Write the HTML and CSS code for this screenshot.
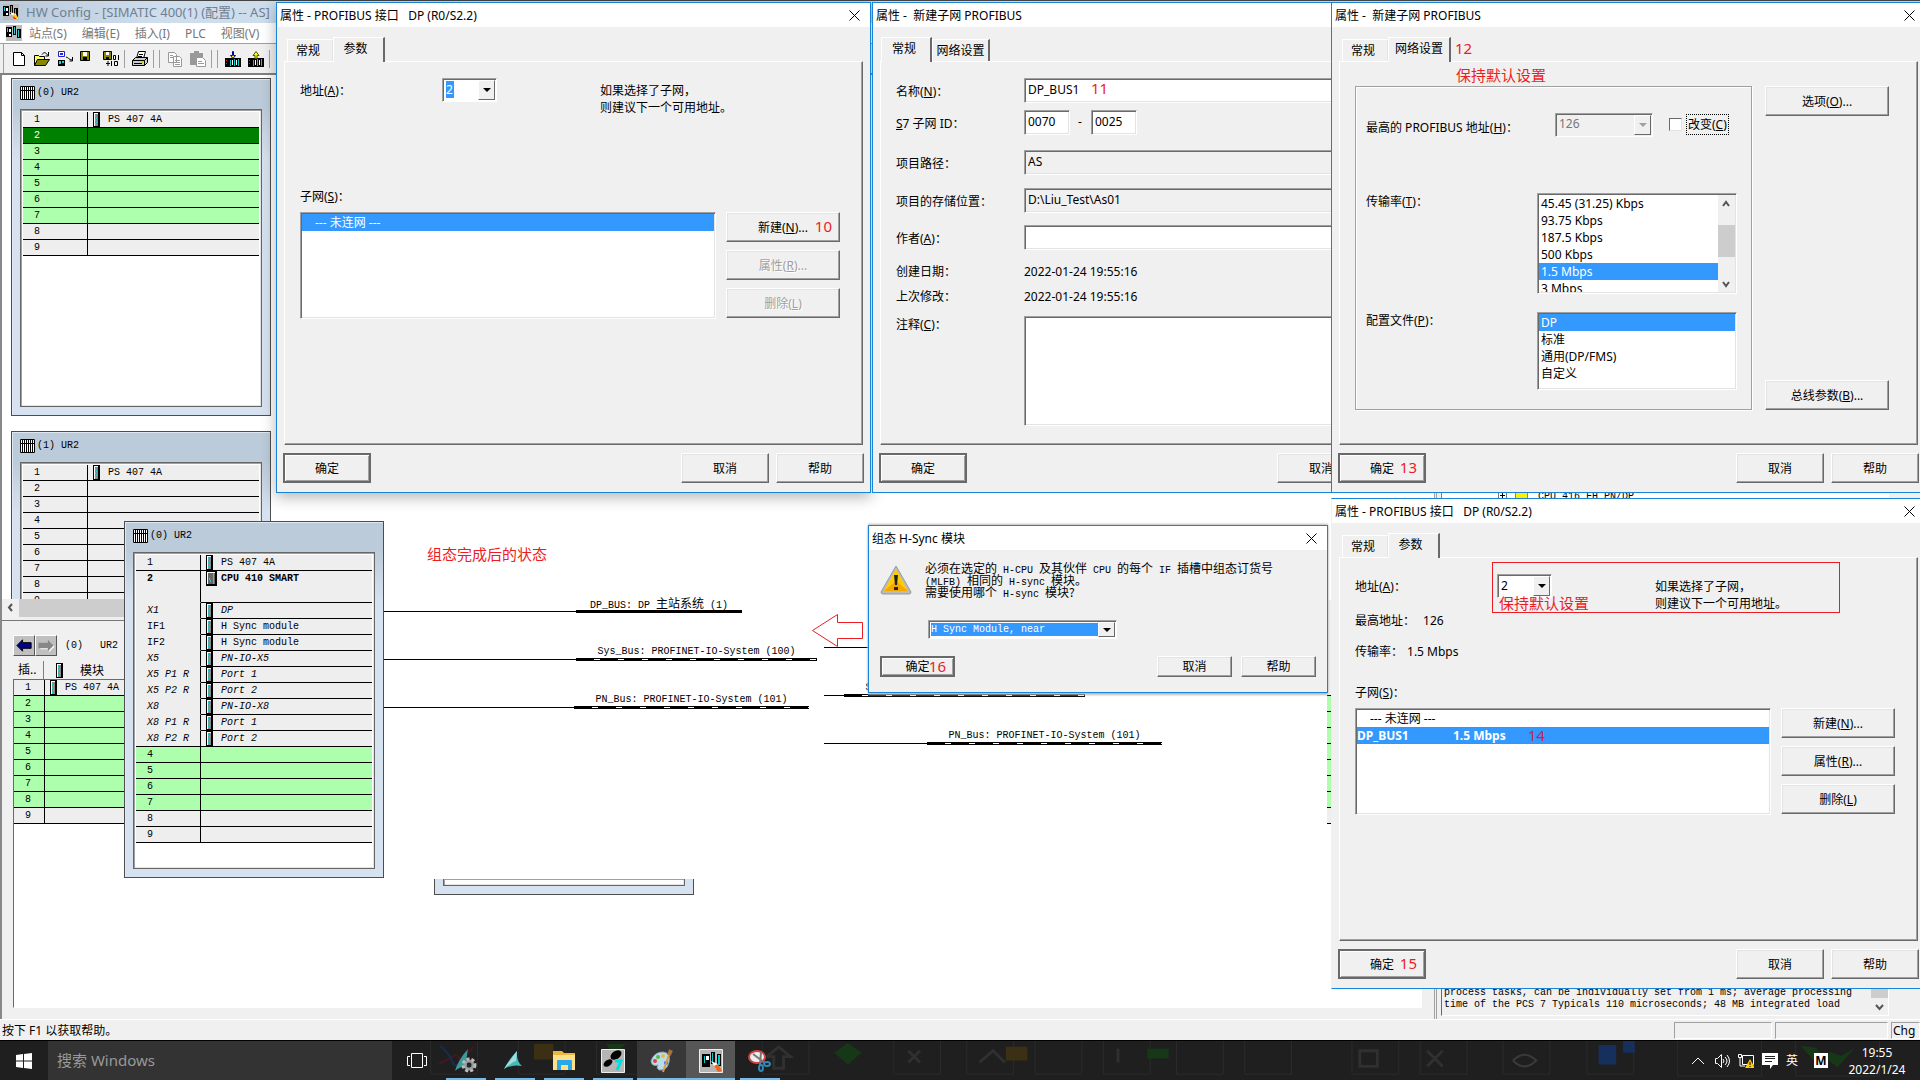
FILE: index.html
```html
<!DOCTYPE html>
<html lang="zh-CN">
<head>
<meta charset="utf-8">
<title>HW Config - [SIMATIC 400(1) (配置) -- AS]</title>
<link rel="stylesheet" href="styles.css">
</head>
<body>
<svg class="defs" aria-hidden="true">
  <symbol id="module" viewBox="0 0 7 15"><path fill="#000" d="M0 0h7v15H0z"/><path fill="#fff" d="M1 1h4v1H1zM1 2h1v12H1z"/><path fill="#888" d="M2 2h3v12H2z"/><path fill="#2cc" d="M2 3h1v2H2zM3 5h1v2H3zM2 7h1v2H2zM3 9h1v2H3zM2 11h1v2H2z"/></symbol>
  <symbol id="cpu" viewBox="0 0 11 15"><path fill="#000" d="M0 0h11v15H0z"/><path fill="#fff" d="M1 1h8v1H1zM1 2h1v11H1z"/><path fill="#666" d="M2 2h7v11H2z"/><path fill="#2cc" d="M7 2h1v11H7zM3 7h1v2H3zM4 9h1v2H4z"/></symbol>
  <symbol id="rack" viewBox="0 0 15 14"><path fill="#fff" d="M0 0h15v14H0z"/><path fill="none" stroke="#000" d="M.5.5h14v13H.5zM2.500 0v14M4.500 0v14M6.500 0v14M8.500 0v14M10.500 0v14M12.500 0v14M0 4.500h15"/></symbol>
  <symbol id="close" viewBox="0 0 11 11"><path fill="none" stroke="#000" d="M.5.5l10 10M10.500.5l-10 10"/></symbol>
  <symbol id="hw" viewBox="0 0 16 16"><path fill="#bbb" d="M0 0h16v16H0z"/><path fill="#000" d="M0 2h6v10H0zM7 1h3v9H7zM11 4h4v9h-4z"/><path fill="#2cc" d="M1 3h1v4H1zM8 2h1v7H8zM12 5h1v7h-1z"/><path fill="#fff" d="M3 4h2v3H3zM3 9h2v2H3z"/></symbol>
  <symbol id="tool" viewBox="0 0 16 16"><path fill="#fff" d="M7 8l6 2 2 5-5-2z"/><path fill="#e22" d="M9 11l5 4h-3z"/><path fill="#fc0" d="M11 10l4 3-1 2-4-3z"/></symbol>
  <symbol id="plcbars" viewBox="0 0 16 16"><path fill="#000" d="M0 7h16v9H0z"/><path fill="#0cc" d="M5 9h1v6H5zM9 8h1v7H9zM13 8h1v7h-1z"/><path fill="#e22" d="M1 9h1v1H1zM1 12h1v1H1z"/><path fill="#fff" d="M7 9h1v5H7zM11 9h1v5h-1z"/></symbol>
</svg>

<div class="desktop">
  <main class="app">
    <header class="app-title"><svg class="i16"><use href="#hw"/><use href="#tool"/></svg>HW Config - [SIMATIC 400(1) (配置) -- AS]</header>
    <nav class="menubar"><svg class="i16"><use href="#hw"/></svg><a href="#">站点(S)</a><a href="#">编辑(E)</a><a href="#">插入(I)</a><a href="#">PLC</a><a href="#">视图(V)</a></nav>
    <div class="toolbar">
      <button aria-label="新建"><svg class="i16" viewBox="0 0 16 16"><path fill="#fff" stroke="#000" d="M2.500 1.500h8l3 3v10h-11zM10.500 1.500v3h3"/></svg></button>
      <button aria-label="打开"><svg class="i16" viewBox="0 0 16 16"><path fill="#ff6" stroke="#000" d="M.5 14.500v-10h4l1 1h5v3"/><path fill="#880" stroke="#000" d="M.5 14.500l3-6h12l-4 6z"/><path fill="none" stroke="#000" d="M8 3.500c2-3 4-2 6 1M14.500 1v4h-3"/></svg></button>
      <button aria-label="上传站点"><svg class="i16" viewBox="0 0 16 16"><path fill="#fff" stroke="#22b" d="M1.500.5h6v5h-6z"/><path fill="#22f" d="M3 2h3v2H3z"/><path fill="#000" d="M1 9h7v6H1z"/><path fill="#2cc" d="M2 10h2v3H2zM5 10h2v2H5z"/><path fill="none" stroke="#000" d="M9 6c2 0 3 3 6 3M15.500 6v4h-3"/></svg></button>
      <button aria-label="保存"><svg class="i16" viewBox="0 0 16 16"><path fill="#880" stroke="#000" d="M.5.500h9v9h-9z"/><path fill="#fff" d="M3 1h4v4H3z"/><path fill="#000" d="M3 6h4v3H3z"/></svg></button>
      <button aria-label="保存和编译"><svg class="i16" viewBox="0 0 16 16"><path fill="#880" stroke="#000" d="M.5.500h8v8h-8z"/><path fill="#fff" d="M3 1h3v3H3z"/><path fill="#000" d="M3 6h3v2H3z"/><path fill="none" stroke="#000" d="M10.500 4.500h2v4h-2zM15.500 4v5M8.500 10v5M11.500 10.500h3v4h-3zM3 12.500h4M5 10v5"/></svg></button>
      <i class="sep"></i>
      <button aria-label="打印"><svg class="i16" viewBox="0 0 16 16"><path fill="#fff" stroke="#000" d="M4.500 7.500l2-7h7l-2 7"/><path fill="#ccc" stroke="#000" d="M.5 9.500l3-3h12v5l-3 3h-12zM.5 9.500h12v5M12.500 9.500l3-3"/><path stroke="#000" d="M7 3.500h4M6 5.500h4M2 12.500h8"/><path fill="#cc0" d="M9 11h2v1H9z"/></svg></button>
      <i class="sep"></i><i class="sep"></i>
      <button aria-label="复制" disabled><svg class="i16" viewBox="0 0 16 16"><path fill="#fff" stroke="#999" d="M1.500 1.500h6l2 2v8h-8zM6.500 5.500h6l2 2v8h-8z"/><path stroke="#999" d="M3 4.500h3M3 6.500h3M8 9.500h5M8 11.500h5M8 13.500h5"/></svg></button>
      <button aria-label="粘贴" disabled><svg class="i16" viewBox="0 0 16 16"><path fill="#999" d="M0 2h4V0h5v2h4v12H0z"/><path fill="#fff" stroke="#999" d="M6.500 6.500h6l3 3v6h-9z"/><path stroke="#999" d="M8 10.500h4M8 12.500h6"/></svg></button>
      <i class="sep"></i><i class="sep"></i>
      <button aria-label="下载到模块"><svg class="i16" viewBox="0 0 16 16"><use href="#plcbars"/><path fill="#ff0" stroke="#00a" d="M7.500.5h1v4h2L8 7.500l-2.500-3h2z"/></svg></button>
      <button aria-label="上传到编程器"><svg class="i16" viewBox="0 0 16 16"><use href="#plcbars"/><path fill="#ff0" stroke="#550" d="M7 7.500h2v-3h2L8 .5l-3 4h2z"/></svg></button>
      <i class="sep"></i>
    </div>

    <div class="workspace">
      <section class="station">
        <div class="racks">
          <article class="rack rack-a">
            <h2 class="rack-title"><svg class="rack-icon"><use href="#rack"/></svg>(0) UR2</h2>
            <div class="rack-frame"><table class="slots">
              <tr><th>1</th><td><span><svg class="mod"><use href="#module"/></svg>PS 407 4A</span></td></tr>
              <tr class="picked"><th>2</th><td></td></tr>
              <tr class="free"><th>3</th><td></td></tr><tr class="free"><th>4</th><td></td></tr><tr class="free"><th>5</th><td></td></tr><tr class="free"><th>6</th><td></td></tr><tr class="free"><th>7</th><td></td></tr>
              <tr><th>8</th><td></td></tr><tr><th>9</th><td></td></tr>
            </table></div>
          </article>
          <article class="rack rack-b">
            <h2 class="rack-title"><svg class="rack-icon"><use href="#rack"/></svg>(1) UR2</h2>
            <div class="rack-frame"><table class="slots">
              <tr><th>1</th><td><span><svg class="mod"><use href="#module"/></svg>PS 407 4A</span></td></tr>
              <tr><th>2</th><td></td></tr><tr><th>3</th><td></td></tr><tr><th>4</th><td></td></tr><tr><th>5</th><td></td></tr><tr><th>6</th><td></td></tr><tr><th>7</th><td></td></tr><tr><th>8</th><td></td></tr><tr><th>9</th><td></td></tr>
            </table></div>
          </article>
        </div>
        <div class="hscroll"><svg viewBox="0 0 17 17"><path fill="none" stroke="#555" stroke-width="2" d="M10 5L7 8.500l3 3.500"/></svg><i></i></div>
        <div class="detail">
          <div class="detail-nav">
            <button aria-label="上一个"><svg viewBox="0 0 20 20"><path fill="#008" stroke="#000" d="M2.500 10l6-6v3h9v6h-9v3z"/></svg></button><button aria-label="下一个"><svg viewBox="0 0 20 20"><path fill="#fff" d="M19 11l-6 6v-3H4V8h9V5z"/><path fill="#888" d="M18 10l-6-6v3H2v6h10v3z"/></svg></button>
            <span>(0)</span><span class="detail-name">UR2</span>
          </div>
          <div class="detail-head"><span class="head-slot">插..</span><span class="head-mod"><svg class="mod"><use href="#module"/></svg>模块</span></div>
          <div class="detail-list"><table class="slots slots-list">
            <tr><th>1</th><td><span><svg class="mod"><use href="#module"/></svg>PS 407 4A</span></td></tr>
            <tr class="free"><th>2</th><td></td></tr><tr class="free"><th>3</th><td></td></tr><tr class="free"><th>4</th><td></td></tr><tr class="free"><th>5</th><td></td></tr><tr class="free"><th>6</th><td></td></tr><tr class="free"><th>7</th><td></td></tr><tr class="free"><th>8</th><td></td></tr>
            <tr><th>9</th><td></td></tr>
          </table></div>
        </div>
      </section>
      <aside class="catalog">
        <div class="tree"><svg viewBox="0 0 34 12"><path fill="#fff" stroke="#777" d="M.5 1.500h8v8h-8z"/><path stroke="#000" d="M2 5.500h5M4.500 3v5"/><path fill="#fe0" stroke="#886" d="M17.500 2.500h12v8h-12z"/></svg>CPU 416 FH PN/DP</div>
        <div class="about"><p>process tasks, can be individually set from 1 ms; average processing time of the PCS 7 Typicals 110 microseconds; 48 MB integrated load</p>
          <div class="about-scroll"><i></i><svg viewBox="0 0 17 17"><path fill="none" stroke="#555" stroke-width="2" d="M5 7l3.500 4L12 7"/></svg></div></div>
      </aside>
    </div>
    <footer class="statusbar"><span class="status-help">按下 F1 以获取帮助。</span><span class="cell cell-a"></span><span class="cell cell-b"></span><span class="cell cell-c">Chg</span></footer>
  </main>

  <section class="result">
    <i class="peek"></i>
    <div class="rack-cut"><div class="rack-frame"></div></div>
    <p class="red caption">组态完成后的状态</p>
    <div class="bus bus-dp"><b>DP_BUS: DP <em>主站系统</em> (1)</b><i></i><i class="trunk"></i></div>
    <div class="bus bus-sys"><b>Sys_Bus: PROFINET-IO-System (100)</b><i></i><i class="trunk dashed"></i></div>
    <div class="bus bus-pn"><b>PN_Bus: PROFINET-IO-System (101)</b><i></i><i class="trunk dashed"></i></div>
    <i class="stub"></i>
    <div class="bus bus-sys2"><b>Sys_Bus: PROFINET-IO-System (100)</b><i></i><i class="trunk dashed"></i></div>
    <div class="bus bus-pn2"><b>PN_Bus: PROFINET-IO-System (101)</b><i></i><i class="trunk dashed"></i></div>
    <svg class="arrow" viewBox="0 0 52 34"><path fill="none" stroke="#ed1c24" d="M.5 16.500l25-16v8h25v16h-25v8z"/></svg>
    <article class="rack rack-done">
      <h2 class="rack-title"><svg class="rack-icon"><use href="#rack"/></svg>(0) UR2</h2>
      <div class="rack-frame"><table class="slots">
        <tr><th>1</th><td><span><svg class="mod"><use href="#module"/></svg>PS 407 4A</span></td></tr>
        <tr class="cpu sub"><th>2</th><td><span><svg class="mod mod-cpu"><use href="#cpu"/></svg>CPU 410 SMART</span></td></tr>
        <tr class="sub it"><th>X1</th><td><span><svg class="mod"><use href="#module"/></svg>DP</span></td></tr>
        <tr class="sub"><th>IF1</th><td><span><svg class="mod"><use href="#module"/></svg>H Sync module</span></td></tr>
        <tr class="sub"><th>IF2</th><td><span><svg class="mod"><use href="#module"/></svg>H Sync module</span></td></tr>
        <tr class="sub it"><th>X5</th><td><span><svg class="mod"><use href="#module"/></svg>PN-IO-X5</span></td></tr>
        <tr class="sub it"><th>X5 P1 R</th><td><span><svg class="mod"><use href="#module"/></svg>Port 1</span></td></tr>
        <tr class="sub it"><th>X5 P2 R</th><td><span><svg class="mod"><use href="#module"/></svg>Port 2</span></td></tr>
        <tr class="sub it"><th>X8</th><td><span><svg class="mod"><use href="#module"/></svg>PN-IO-X8</span></td></tr>
        <tr class="sub it"><th>X8 P1 R</th><td><span><svg class="mod"><use href="#module"/></svg>Port 1</span></td></tr>
        <tr class="it"><th>X8 P2 R</th><td><span><svg class="mod"><use href="#module"/></svg>Port 2</span></td></tr>
        <tr class="free"><th>4</th><td></td></tr><tr class="free"><th>5</th><td></td></tr><tr class="free"><th>6</th><td></td></tr><tr class="free"><th>7</th><td></td></tr>
        <tr><th>8</th><td></td></tr><tr><th>9</th><td></td></tr>
      </table></div>
    </article>
  </section>

  <section class="dialog dialog-1">
    <header class="dialog-title"><h2>属性 - PROFIBUS 接口&nbsp;&nbsp; DP (R0/S2.2)</h2><button aria-label="关闭"><svg><use href="#close"/></svg></button></header>
    <div class="tabs"><button class="tab tab-back">常规</button><button class="tab tab-front tab-mid">参数</button></div>
    <div class="pane params">
      <div class="row-address"><label for="addr1">地址(<u>A</u>)：</label>
        <span class="combo"><select id="addr1" class="text-marked"><option>2</option></select><i></i></span>
        <p>如果选择了子网，<br>则建议下一个可用地址。</p></div>
      <div class="row-label">子网(<u>S</u>)：</div>
      <div class="nets">
        <ul class="sunken list" role="listbox" aria-label="子网"><li class="on none" role="option" aria-selected="true">--- 未连网 ---</li></ul>
        <div class="net-buttons"><button class="btn">新建(<u>N</u>)...<b class="red mark">10</b></button><button class="btn" disabled>属性(<u>R</u>)...</button><button class="btn" disabled>删除(<u>L</u>)</button></div>
      </div>
    </div>
    <footer class="dialog-foot"><button class="btn default">确定</button><button class="btn push">取消</button><button class="btn">帮助</button></footer>
  </section>

  <section class="dialog dialog-2">
    <header class="dialog-title"><h2>属性 -&nbsp; 新建子网 PROFIBUS</h2></header>
    <div class="tabs"><button class="tab tab-front tab-first">常规</button><button class="tab tab-back tab-last">网络设置</button></div>
    <div class="pane general">
      <label for="name">名称(<u>N</u>)：</label><div class="field-mark"><input id="name" class="sunken" value="DP_BUS1"><b class="red">11</b></div>
      <label for="id1"><u>S</u>7 子网 ID：</label><div class="ids"><input id="id1" class="sunken" value="0070"><span>-</span><input class="sunken" aria-label="S7 子网 ID 2" value="0025"></div>
      <label for="path">项目路径：</label><input id="path" class="sunken" readonly value="AS">
      <label for="store">项目的存储位置：</label><input id="store" class="sunken" readonly value="D:\Liu_Test\As01">
      <label for="author">作者(<u>A</u>)：</label><input id="author" class="sunken">
      <span class="text">创建日期：</span><span class="text">2022-01-24 19:55:16</span>
      <span class="text">上次修改：</span><span class="text">2022-01-24 19:55:16</span>
      <label class="note-label" for="note">注释(<u>C</u>)：</label><textarea id="note" class="sunken"></textarea>
    </div>
    <footer class="dialog-foot"><button class="btn default">确定</button><button class="btn push">取消</button></footer>
  </section>

  <section class="dialog dialog-3">
    <header class="dialog-title"><h2>属性 -&nbsp; 新建子网 PROFIBUS</h2><button aria-label="关闭"><svg><use href="#close"/></svg></button></header>
    <div class="tabs"><button class="tab tab-back">常规</button><button class="tab tab-front tab-net">网络设置</button><b class="red">12</b></div>
    <div class="pane network">
      <p class="red keep">保持默认设置</p>
      <div class="group">
        <div class="max-row"><label for="max">最高的 PROFIBUS 地址(<u>H</u>)：</label>
          <span class="combo combo-off"><select id="max" disabled><option>126</option></select><i></i></span>
          <label class="check"><input type="checkbox"><span>改变(<u>C</u>)</span></label></div>
        <div class="pick-row rate-row"><span>传输率(<u>T</u>)：</span>
          <div class="sunken rates"><ul role="listbox" aria-label="传输率"><li>45.45 (31.25) Kbps</li><li>93.75 Kbps</li><li>187.5 Kbps</li><li>500 Kbps</li><li class="on">1.5 Mbps</li><li>3 Mbps</li></ul>
            <div class="vscroll"><svg viewBox="0 0 16 17"><path fill="none" stroke="#555" stroke-width="2" d="M5 11l3-4 3 4"/></svg><i></i><svg viewBox="0 0 16 17"><path fill="none" stroke="#555" stroke-width="2" d="M5 7l3 4 3-4"/></svg></div></div></div>
        <div class="pick-row"><span>配置文件(<u>P</u>)：</span>
          <ul class="sunken profiles" role="listbox" aria-label="配置文件"><li class="on">DP</li><li>标准</li><li>通用(DP/FMS)</li><li>自定义</li></ul></div>
      </div>
      <div class="side"><button class="btn">选项(<u>O</u>)...</button><button class="btn">总线参数(<u>B</u>)...</button></div>
    </div>
    <footer class="dialog-foot"><button class="btn default">确定<b class="red mark">13</b></button><button class="btn push">取消</button><button class="btn">帮助</button></footer>
  </section>

  <section class="dialog dialog-4">
    <header class="dialog-title"><h2>属性 - PROFIBUS 接口&nbsp;&nbsp; DP (R0/S2.2)</h2><button aria-label="关闭"><svg><use href="#close"/></svg></button></header>
    <div class="tabs"><button class="tab tab-back">常规</button><button class="tab tab-front tab-mid">参数</button></div>
    <div class="pane params params-full">
      <div class="row-address"><label for="addr2">地址(<u>A</u>)：</label>
        <span class="combo"><select id="addr2"><option>2</option></select><i></i></span>
        <p>如果选择了子网，<br>则建议下一个可用地址。</p></div>
      <div class="row-label">最高地址：<span class="max-value">126</span></div>
      <div class="row-label">传输率：<span class="rate-value">1.5 Mbps</span></div>
      <div class="row-label">子网(<u>S</u>)：</div>
      <div class="nets">
        <ul class="sunken list" role="listbox" aria-label="子网"><li class="none">--- 未连网 ---</li><li class="on bus-item"><b>DP_BUS1</b><b>1.5 Mbps</b><span class="red">14</span></li></ul>
        <div class="net-buttons"><button class="btn">新建(<u>N</u>)...</button><button class="btn">属性(<u>R</u>)...</button><button class="btn">删除(<u>L</u>)</button></div>
      </div>
      <div class="red frame">保持默认设置</div>
    </div>
    <footer class="dialog-foot"><button class="btn default">确定<b class="red mark">15</b></button><button class="btn push">取消</button><button class="btn">帮助</button></footer>
  </section>

  <section class="dialog dialog-sync">
    <header class="dialog-title"><h2>组态 H-Sync 模块</h2><button aria-label="关闭"><svg><use href="#close"/></svg></button></header>
    <div class="sync-message">
      <svg viewBox="0 0 32 30"><path fill="#bbb" stroke="#999" d="M16 1L31 27q0 2-2 2H3q-2 0-2-2z"/><path fill="#fc0" d="M16 4l12 22H4z"/><path fill="#f5a800" d="M16 16l12 10H4z"/><path fill="#222" d="M14 10h4l-1 10h-2zM14 22h4v3h-4z"/></svg>
      <p>必须在选定的<kbd> H-CPU </kbd>及其伙伴<kbd> CPU </kbd>的每个<kbd> IF </kbd>插槽中组态订货号<br><kbd>(MLFB) </kbd>相同的<kbd> H-sync </kbd>模块。<br>需要使用哪个<kbd> H-sync </kbd>模块?</p>
    </div>
    <span class="combo combo-sync"><select aria-label="H-Sync 模块"><option>H Sync Module, near</option></select><i></i></span>
    <footer class="dialog-foot"><button class="btn default">确定<b class="red mark">16</b></button><button class="btn push">取消</button><button class="btn">帮助</button></footer>
  </section>

  <footer class="taskbar">
    <button class="start" aria-label="开始"><svg viewBox="0 0 16 16"><path fill="#fff" d="M0 2l7-1v6.500H0zM8 1l8-1v7.500H8zM0 8.500h7V15l-7-1zM8 8.500h8V16l-8-1z"/></svg></button>
    <input class="search" aria-label="搜索 Windows" placeholder="搜索 Windows">
    <svg class="ghosts" viewBox="0 0 1528 40"><g fill="none" stroke="#2c2c2c"><path d="M20-5h48v37q0 2-2 2H22q-2 0-2-2zM110-5h48v37q0 2-2 2h-44q-2 0-2-2zM190-5h48v37q0 2-2 2h-44q-2 0-2-2zM360-5h48v39h-48zM495-5h48v39h-48zM570-5h48v39h-48zM640-5h48v39h-48zM710-5h48v39h-48zM785-5h48v39h-48zM855-5h48v39h-48zM965-5h48v39h-48zM1035-5h48v39h-48zM1120-5h48v39h-48zM1206-5h48v39h-48zM1299-5h86v41h-86zM1420-5h86v41h-86z"/><path stroke="#303030" stroke-width="3" d="M365 16l12-10 12 10h-7v12h-10V16zM510 10l12 12M522 10l-12 12M583 22l14-12 12 12M725 8v14M973 10h18v16h-18zM1042 10l16 16M1058 10l-16 16"/></g><path fill="none" stroke="#451820" stroke-width="2" d="M28 24l18-10 6 6 12-14"/><path fill="none" stroke="#182c4c" stroke-width="2" d="M30 5q10 8 14 20h18"/><path fill="#173817" d="M200 3h20l-12 12zM448 2l14 10-14 12-14-12zM755 8h22v10h-22zM1425 5l20 22 8-8 10 8 18-20-14 8-12-4-4 8-10-12z"/><path fill="#15305c" d="M1218 4h18v20h-18zM1243-4h12v16h-12z"/><path fill="#3c3014" d="M126 3h20v16h-20zM610 6h22v14h-22z"/><circle cx="156" cy="18" r="7" fill="#401010"/><path fill="none" stroke="#3a3a3a" stroke-width="2" d="M1130 20q12-12 24 0-12 12-24 0"/></svg>
    <div class="tasks">
      <button class="task view" aria-label="任务视图"><svg viewBox="0 0 20 16"><path fill="none" stroke="#fff" d="M4.500.5h11v14h-11zM3 3.500H.5v9H3M17 3.500h2.500v9H17"/></svg></button>
      <button class="task" aria-label="SIMATIC 服务"><svg viewBox="0 0 24 24"><path fill="#3a9a9c" d="M14 0Q4 11 1 22q6-5 12-4-1-10 1-18"/><circle cx="15" cy="16" r="4" fill="none" stroke="#999" stroke-width="3"/><circle cx="15" cy="16" r="6" fill="none" stroke="#bbb" stroke-width="3" stroke-dasharray="3 2"/></svg></button>
      <button class="task" aria-label="SIMATIC Manager"><svg viewBox="0 0 24 24"><path fill="#4bb" d="M14 2Q6 10 1 20q8-5 18-3-6-5-5-15"/><path fill="#a4dcdc" d="M14 2Q7 11 1 20q8-7 12-8z"/></svg></button>
      <button class="task" aria-label="文件资源管理器"><svg viewBox="0 0 24 24"><path fill="#e8b93c" d="M1 2h9l2 2h11v17H1z"/><path fill="#ffe08a" d="M1 6h22v15H1z"/><path fill="#28a8e8" d="M5 12q0-1 1-1h13q1 0 1 1v9h-4v-5H9v5H5z"/></svg></button>
      <button class="task" aria-label="STEP 7"><svg viewBox="0 0 24 24"><path fill="#b5b5b5" stroke="#eee" d="M.5.5h23v23H.5z"/><ellipse cx="15" cy="6" rx="6" ry="4" transform="rotate(-35 15 6)"/><ellipse cx="7" cy="14" rx="5" ry="3" transform="rotate(-35 7 14)"/><path fill="none" stroke="#0dd" stroke-width="3" d="M14 12h6l-4 9"/></svg></button>
      <button class="task task-open" aria-label="画图"><svg viewBox="0 0 24 24"><path fill="#b8dcec" stroke="#87a9ba" d="M1 12q3-9 12-9 8 1 6 10-2 9-10 8-3-2-1-5-6 2-7-4"/><circle cx="5" cy="12" r="2" fill="#d43"/><circle cx="8" cy="8" r="2" fill="#5b4"/><circle cx="13" cy="7" r="2" fill="#eb3"/><circle cx="16" cy="14" r="2" fill="#46c"/><path stroke="#d79a45" stroke-width="2" d="M20 3l-7 20"/><path stroke="#a8703a" stroke-width="4" d="M21 1l-2 5"/></svg></button>
      <button class="task task-active" aria-label="HW Config"><svg viewBox="0 0 24 24"><path fill="#b5b5b5" stroke="#eee" d="M.5.5h23v23H.5z"/><path fill="#000" d="M3 5h8v13H3zM12 3h4v12h-4zM18 5h4v12h-4z"/><path fill="#0cc" d="M13 4h1v10h-1zM19 6h2v10h-2zM5 7h1v7H5z"/><path fill="#fff" d="M7 7h3v4H7zM12 12l7 3-2 5z"/><path fill="#e62" d="M15 17l4-2 4 7-4 1z"/></svg></button>
      <button class="task" aria-label="截图工具"><svg viewBox="0 0 24 24"><ellipse cx="9" cy="8" rx="8" ry="6" fill="#eee" stroke="#c44" stroke-width="2"/><path stroke="#777" stroke-width="2" d="M5 5l12 9M13 3l-1 13"/><ellipse cx="13" cy="19" rx="2" ry="3" fill="none" stroke="#38b" stroke-width="2"/><ellipse cx="19" cy="15" rx="3" ry="2" fill="none" stroke="#38b" stroke-width="2"/></svg></button>
    </div>
    <div class="tray">
      <svg viewBox="0 0 16 16"><path fill="none" stroke="#fff" d="M2 11l6-6 6 6"/></svg>
      <svg viewBox="0 0 16 16"><path fill="none" stroke="#fff" d="M1.500 5.500h2l4-4v13l-4-4h-2zM9 6q2 2 0 4M11 4q4 4 0 8M13 2q5 6 0 12"/></svg>
      <svg viewBox="0 0 16 16"><path fill="none" stroke="#fff" d="M.5 1.500h3v3h-3zM4.500 2.500h11v9h-11zM2 5v8h5"/><path fill="#fc0" d="M12 6l5 9H7z"/><path stroke="#000" d="M12 9v3M12 13v1"/></svg>
      <svg viewBox="0 0 16 16"><path fill="#fff" d="M0 0h16v12h-5l-3 4v-4H0z"/><path stroke="#222" d="M3 3.500h10M3 5.500h10M3 8.500h7"/></svg>
      <span>英</span><span class="ime">M</span>
      <time>19:55<br>2022/1/24</time>
    </div>
  </footer>
</div>
</body>
</html>
```
FILE: styles.css
```css
* { box-sizing: border-box; }
body, h2, p, ul { margin: 0; padding: 0; }
ul { list-style: none; }
body, button, input, select, textarea {
  font: 12px/17px "Noto Sans", "Noto Sans CJK SC", sans-serif;
  color: #000;
}
button { padding: 0; border: 0; background: none; }
h2 { font-size: 12px; font-weight: 400; }
.defs { position: absolute; width: 0; height: 0; }
.red { color: #ed1c24; font-size: 15px; font-weight: 400; }

.desktop { position: relative; display: flex; flex-direction: column; height: 100vh; overflow: hidden; background: #fff; }

/* main window */
.app { flex: 1; display: flex; flex-direction: column; min-height: 0; background: #f0f0f0; }
.i16 { width: 16px; height: 16px; flex: none; }
.app-title { display: flex; align-items: center; gap: 7px; height: 23px; padding-left: 3px; border-top: 1px solid #444; background: linear-gradient(90deg, #b9cadb, #cfdeed 160px, #bccddd); color: #6f8093; font-size: 13px; white-space: nowrap; }
.menubar { display: flex; align-items: center; height: 20px; padding-left: 6px; background: #fff; }
.menubar a { margin-left: 7px; margin-right: 8px; color: #777; text-decoration: none; }
.toolbar { display: flex; align-items: center; height: 32px; padding-left: 7px; border-top: 1px solid #a0a0a0; border-bottom: 2px solid #808080; box-shadow: inset 3px 0 #f0f0f0, inset 4px 0 #a0a0a0; }
.toolbar button { width: 23px; height: 22px; display: grid; place-items: center; }
.sep { width: 1px; height: 18px; margin: 0 3px 0 2px; background: #a0a0a0; }
.workspace { flex: 1; display: flex; min-height: 0; }
.station { flex: 1; display: flex; flex-direction: column; border-left: 2px solid #888; min-width: 0; }
.racks { position: relative; height: 524px; overflow: hidden; background: #fff; flex: none; }

.rack { position: absolute; width: 260px; display: flex; flex-direction: column; padding: 0 8px 8px; border: 1px solid #4d4d4d; background: linear-gradient(#bccbd9, #bccbd9 28px, #d7e2f0 80px); box-shadow: inset 1px 1px #dfe8f2; }
.rack-a { left: 9px; top: 3px; height: 338px; }
.rack-b { left: 9px; top: 356px; height: 338px; }
.rack-done { left: 0; top: 0; height: 357px; }
.rack-title { display: flex; align-items: center; gap: 2px; height: 30px; padding-bottom: 2px; font: 10px/14px "Liberation Mono", monospace; }
.rack-icon { width: 15px; height: 14px; }
.rack-frame { flex: 1; padding: 2px 2px 1px; border: 1px solid #666; background: #fff; box-shadow: inset 1px 1px #a0a0a0, inset -1px -1px #e3e3e3; }
.slots { width: 100%; border-spacing: 0; table-layout: fixed; font: 10px/15px "Liberation Mono", monospace; }
.slots th, .slots td { height: 16px; padding: 0; border-bottom: 1px solid #000; background: #eee; font-weight: 400; text-align: left; }
.slots th { width: 65px; padding-left: 11px; border-right: 1px solid #000; white-space: nowrap; }
.slots td span { display: flex; align-items: center; gap: 8px; height: 15px; padding-left: 5px; }
.slots .free > * { background: #adffad; }
.slots .picked > * { background: #008000; color: #fff; }
.slots .sub th { border-bottom-color: #eee; }
.slots .it { font-style: italic; }
.slots .cpu > * { height: 32px; font-weight: 700; vertical-align: top; }
.mod { width: 7px; height: 15px; flex: none; }
.mod-cpu { width: 11px; margin-right: -4px; }

.hscroll { display: flex; height: 18px; background: #f0f0f0; flex: none; }
.hscroll svg { width: 17px; height: 17px; }
.hscroll i { flex: 1; background: #cdcdcd; }
.detail { flex: 1; display: flex; flex-direction: column; min-height: 0; margin-top: 3px; padding: 14px 12px 11px 11px; border-top: 1px solid #777; }
.detail-nav { display: flex; align-items: center; height: 21px; font: 10px/14px "Liberation Mono", monospace; }
.detail-nav button { width: 22px; height: 21px; background: #c0c0c0; border: 1px solid; border-color: #fff #555 #555 #fff; }
.detail-nav svg { display: block; width: 20px; height: 19px; }
.detail-nav span { margin-left: 8px; }
.detail-nav .detail-name { margin-left: 17px; }
.detail-head { display: flex; height: 18px; margin-top: 5px; }
.head-slot { width: 31px; padding-left: 5px; border-right: 1px solid #808080; overflow: hidden; }
.head-mod { display: flex; align-items: center; gap: 17px; padding-left: 12px; }
.detail-list { flex: 1; border: 1px solid; border-color: #696969 #fff #fff #696969; background: #fff; }
.slots-list { width: 340px; }
.slots-list th { width: 31px; }

.catalog { width: 486px; display: flex; flex-direction: column; padding: 0 31px 3px 4px; border-left: 3px double #a0a0a0; }
.tree { flex: 1; display: flex; align-items: flex-start; gap: 6px; padding: 415px 0 0 56px; font: 10px/14px "Liberation Mono", monospace; border-left: 1px solid #808080; background: #fff; }
.tree svg { width: 34px; height: 12px; }
.about { display: flex; height: 36px; padding-left: 2px; border: 1px solid #808080; border-color: #808080 #fff #fff #696969; font: 10px/12px "Liberation Mono", monospace; }
.about p { width: 431px; padding: 6px 12px 0 0; }
.about-scroll { width: 17px; display: flex; flex-direction: column; }
.about-scroll i { flex: 1; background: #cdcdcd; }
.about-scroll svg { width: 17px; height: 17px; }

.statusbar { display: flex; align-items: stretch; gap: 3px; height: 21px; padding: 2px 0 1px 2px; border-top: 1px solid #fff; }
.status-help { flex: 1; }
.cell { border: 1px solid; border-color: #a0a0a0 #fff #fff #a0a0a0; padding-left: 1px; line-height: 16px; }
.cell-a { width: 98px; } .cell-b { width: 113px; } .cell-c { width: 29px; }

/* annotated result area */
.result { position: absolute; left: 124px; top: 521px; width: 1208px; height: 374px; background: linear-gradient(#fff, #fff) 260px 0 no-repeat; }
.caption { position: absolute; left: 303px; top: 22px; line-height: 22px; }
.bus { position: absolute; display: grid; grid-template-columns: 192px 241px; grid-template-rows: 12px 3px; align-items: center; font: 10px/12px "Liberation Mono", monospace; }
.bus b { grid-column: 2; font-weight: 400; text-align: center; white-space: nowrap; }
.bus em { font: 12px/12px "Noto Sans CJK SC", sans-serif; }
.bus i { grid-column: 1; height: 1px; background: #000; }
.bus .trunk { grid-column: 2; height: 3px; }
.bus .dashed { background: linear-gradient(#000, #000) 0 0 / 100% 1px no-repeat, linear-gradient(#000, #000) 0 2px / 100% 1px no-repeat, repeating-linear-gradient(90deg, #000 0 18px, #fff 18px 24px); }
.bus-dp { left: 260px; top: 77px; grid-template-columns: 192px 166px; }
.bus-sys { left: 260px; top: 125px; }
.bus-pn { left: 260px; top: 173px; grid-template-columns: 190px 235px; }
.bus-sys2 { left: 700px; top: 161px; grid-template-columns: 20px 241px; }
.bus-pn2 { left: 700px; top: 209px; grid-template-columns: 103px 235px; }
.stub { position: absolute; left: 700px; top: 126px; width: 60px; height: 1px; background: #000; }
.arrow { position: absolute; left: 688px; top: 93px; width: 52px; height: 34px; }
.rack-cut { position: absolute; left: 310px; top: 358px; width: 260px; height: 16px; display: flex; padding: 0 8px 8px; background: #d7e2f0; border: 1px solid #4d4d4d; border-top: 0; }
.rack-cut .rack-frame { border-top: 0; }
.peek { position: absolute; right: 0; top: 79px; width: 5px; height: 224px; background: linear-gradient(#f0f0f0, #f0f0f0) 0 0 / 100% 95px no-repeat, repeating-linear-gradient(#000 0 1px, transparent 1px 16px) 0 95px / 100% 129px no-repeat, linear-gradient(#adffad 207px, #eee 207px); }

/* property dialogs */
.dialog { position: absolute; width: 595px; height: 491px; display: flex; flex-direction: column; border: 1px solid #1883d7; background: #f0f0f0; }
.dialog-1 { left: 276px; top: 2px; box-shadow: 0 4px 14px rgba(0, 0, 0, .3); }
.dialog-2 { left: 872px; top: 2px; }
.dialog-3 { left: 1331px; top: 2px; }
.dialog-4 { left: 1331px; top: 498px; border-left-color: #f0f0f0; }
.dialog-title { display: flex; justify-content: space-between; align-items: center; height: 24px; padding: 0 10px 0 3px; background: #fff; flex: none; }
.dialog-title button { height: 11px; }
.dialog-title svg { display: block; width: 11px; height: 11px; }
.tabs { display: flex; align-items: flex-end; height: 34px; padding-left: 10px; flex: none; }
.tab { border: 1px solid #fff; border-bottom: 0; }
.tab-back { width: 46px; height: 22px; padding-right: 4px; border-right-color: #e3e3e3; }
.tab-front { position: relative; z-index: 1; height: 25px; padding-bottom: 4px; margin-bottom: -1px; background: #f0f0f0; border-right: 2px solid #696969; }
.tab-mid { width: 52px; padding-right: 6px; }
.tab-first { width: 51px; margin-left: -2px; padding-right: 4px; }
.tab-last { width: 58px; padding: 0; border-right: 2px solid #696969; }
.tab-net { width: 63px; }
.tabs .red { margin: 0 0 4px 4px; }
.pane { position: relative; height: 384px; margin: 0 7px; border: 1px solid; border-color: #fff #696969 #696969 #fff; box-shadow: inset -1px -1px #a0a0a0; flex: none; }
.dialog-foot { display: flex; gap: 7px; padding: 8px 6px 0 6px; }
.dialog-foot .btn { width: 88px; }
.dialog-foot .push { margin-left: auto; }
.dialog-2 .push { margin-right: 95px; }
.btn { position: relative; height: 30px; border: 1px solid; border-color: #fff #696969 #696969 #fff; background: #f0f0f0; box-shadow: inset -1px -1px #a0a0a0, inset 1px 1px #e3e3e3; }
.btn.default { border: 2px solid; border-color: #696969; box-shadow: inset 1px 1px #fff, inset -1px -1px #a0a0a0; }
.btn:disabled { color: #a0a0a0; text-shadow: 1px 1px #fff; }
.mark { position: absolute; right: 7px; top: 50%; margin-top: -10px; line-height: 18px; }
.sunken { border: 1px solid; border-color: #a0a0a0 #fff #fff #a0a0a0; background: #fff; box-shadow: inset 1px 1px #696969, inset -1px -1px #e3e3e3; padding: 1px; border-radius: 0; }
.on { background: #39f; color: #fff; }

.combo { position: relative; display: flex; width: 55px; height: 24px; }
.combo select { appearance: none; width: 100%; border: 1px solid; border-color: #a0a0a0 #fff #fff #a0a0a0; border-radius: 0; background: #fff; box-shadow: inset 1px 1px #696969; padding: 0 0 2px 3px; opacity: 1; }
.combo i { position: absolute; right: 2px; top: 2px; bottom: 2px; width: 17px; display: grid; place-items: center; background: #f0f0f0; border: 1px solid; border-color: #fff #696969 #696969 #fff; pointer-events: none; }
.combo i::before { content: ""; border: 4px solid transparent; border-top-color: #000; border-bottom: 0; }
.combo .text-marked { color: #fff; background: linear-gradient(#39f, #39f) 3px 2px / 8px 17px no-repeat #fff; }
.combo-off select { background: #f0f0f0; color: #777; }
.combo-off i::before { border-top-color: #a0a0a0; }

.params { display: grid; grid-template-rows: 110px 24px 107px; padding: 16px 0 0 15px; align-content: start; }
.params-full { grid-template-rows: 38px 31px 41px 24px 107px; }
.row-address { display: grid; grid-template-columns: 142px 158px 1fr; align-items: start; }
.row-address label, .row-address p { padding-top: 4px; }
.max-value { margin-left: 8px; }
.rate-value { margin-left: 4px; }
.nets { display: flex; gap: 10px; }
.list { width: 416px; }
.none { padding-left: 13px; }
.net-buttons { display: grid; gap: 8px; width: 114px; align-content: start; }
.bus-item { display: grid; grid-template-columns: 96px 75px 1fr; outline: 1px dotted #b87333; outline-offset: -1px; }
.bus-item .red { color: #d0205a; }
.frame { position: absolute; left: 152px; top: 4px; width: 348px; height: 51px; border: 1px solid #ed1c24; padding: 30px 0 0 6px; line-height: 20px; pointer-events: none; }

.general { display: grid; grid-template-columns: 128px 1fr; grid-template-rows: 32px 40px 38px 37px 33px 25px 33px 111px; padding: 16px 0 0 15px; align-items: start; align-content: start; }
.general label, .general .text { padding-top: 5px; }
.general .note-label { padding-top: 0; }
.general input { width: 100%; height: 25px; padding: 0 3px 3px; }
.general input:read-only { background: #f0f0f0; }
.general textarea { width: 100%; height: 110px; resize: none; }
.general .field-mark { position: relative; width: 100%; }
.field-mark .red { position: absolute; left: 67px; top: 2px; }
.ids { display: flex; gap: 8px; line-height: 24px; }
.general .ids input { width: 46px; }
.ids span { width: 5px; }

.network { display: grid; grid-template-columns: 397px 124px; gap: 0 13px; grid-template-rows: 24px 324px; padding-left: 15px; }
.keep { grid-column: 1 / -1; padding-left: 101px; line-height: 26px; }
.group { border: 1px solid #a0a0a0; box-shadow: inset 1px 1px #fff, 1px 1px #fff; padding: 25px 0 0 10px; }
.max-row { display: flex; align-items: center; height: 25px; }
.max-row > label:first-child { width: 189px; padding-top: 5px; }
.max-row .combo { width: 98px; }
.check { display: flex; align-items: center; gap: 4px; margin-left: 16px; }
.check input { appearance: none; width: 13px; height: 13px; margin: 0; background: #fff; border: 1px solid; border-color: #696969 #e3e3e3 #e3e3e3 #696969; }
.check span { padding: 1px; border: 1px dotted #000; white-space: nowrap; }
.pick-row { display: flex; margin-top: 18px; height: 78px; }
.rate-row { margin-top: 56px; height: 101px; }
.pick-row > span { width: 171px; }
.pick-row > .sunken { width: 200px; }
.pick-row li { padding-left: 2px; }
.rates { display: flex; overflow: hidden; }
.rates ul { flex: 1; height: 97px; overflow: hidden; }
.vscroll { width: 17px; display: flex; flex-direction: column; background: #f0f0f0; }
.vscroll svg { width: 16px; height: 17px; flex: none; }
.vscroll i { height: 32px; margin: 13px 0 18px; background: #cdcdcd; }
.side { display: flex; flex-direction: column; justify-content: space-between; }

/* H-Sync dialog */
.dialog-sync { left: 868px; top: 525px; width: 460px; height: 168px; box-shadow: 0 -1px 2px #bbb, 0 2px 2px #bbb; }
.sync-message { display: flex; gap: 13px; height: 70px; padding: 12px 0 0 11px; }
.sync-message svg { width: 32px; height: 30px; margin-top: 3px; flex: none; }
.sync-message p { font: 12px/12px "Noto Sans CJK SC", sans-serif; white-space: nowrap; }
.sync-message kbd { font: 10px/1px "Liberation Mono", monospace; white-space: pre; }
.combo-sync { width: 189px; height: 19px; margin: 0 0 0 59px; }
.combo-sync select { font: 10px/14px "Liberation Mono", monospace; color: #fff; padding: 0 2px; background: linear-gradient(#39f, #39f) 2px 2px / 168px 13px no-repeat #fff; }
.dialog-sync .dialog-foot { padding: 17px 11px 0 11px; gap: 9px; }
.dialog-sync .btn { width: 75px; height: 21px; line-height: 15px; }

/* taskbar */
.taskbar { position: relative; display: flex; height: 40px; background: #1f1f1f; border-top: 1px solid #000; flex: none; }
.start { width: 48px; display: grid; place-items: center; }
.start svg { width: 16px; height: 16px; }
.search { width: 344px; border: 0; padding: 0 9px; background: #333; font-size: 15px; }
.search::placeholder { color: #999; opacity: 1; }
.ghosts { position: absolute; left: 392px; top: 0; width: 1528px; height: 39px; }
.tasks { position: relative; display: flex; }
.task { width: 49px; display: grid; place-items: center; background: linear-gradient(#76b9ed, #76b9ed) 50% 100% / 40px 2px no-repeat; }
.task svg { width: 24px; height: 24px; }
.view { background: none; }
.view svg { width: 20px; height: 16px; }
.task-open { background-size: 100% 2px; background-color: #383838; }
.task-active { background-size: 100% 2px; background-color: #575757; }
.tray { position: relative; display: flex; align-items: center; gap: 8px; margin-left: auto; padding-right: 12px; color: #fff; }
.tray svg { width: 16px; height: 16px; }
.tray .ime { width: 14px; margin: 0 4px 0 8px; background: #fff; color: #000; font-weight: 700; text-align: center; line-height: 15px; }
.tray time { width: 62px; margin-left: 6px; text-align: center; }
```
